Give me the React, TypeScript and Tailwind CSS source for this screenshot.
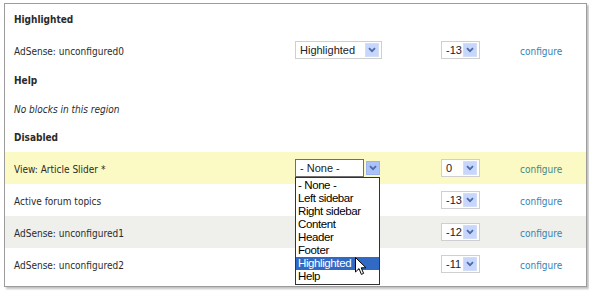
import React from 'react';

const label = "font-['DejaVu_Sans_Condensed','DejaVu_Sans',sans-serif] text-[10px] text-[#2b2b2b]";
const ctl = "font-['Liberation_Sans',Arial,sans-serif] text-[11px] text-[#222]";

const Chevron: React.FC<{ hot?: boolean }> = ({ hot }) => (
  <span
    className={`flex h-[14px] w-[14px] items-center justify-center border ${
      hot ? 'border-[#9db4ee] bg-[#aac2f7]' : 'border-[#d3ddf6] bg-[#c7d6fb]'
    }`}
  >
    <svg width="8" height="6" viewBox="0 0 8 6">
      <path d="M1 1.2 L4 4.2 L7 1.2" fill="none" stroke="#4d6aa8" strokeWidth="1.8" />
    </svg>
  </span>
);

const Select: React.FC<{ value: string; width: string }> = ({ value, width }) => (
  <div className={`flex h-[18px] ${width} items-center justify-between border border-[#cfcfcf] bg-white pl-[4px] pr-[2px] ${ctl}`}>
    <span>{value}</span>
    <Chevron />
  </div>
);

const Configure: React.FC<{ tint?: string }> = ({ tint = 'text-[#3583b5]' }) => (
  <span className={`font-['DejaVu_Sans_Condensed','DejaVu_Sans',sans-serif] text-[10px] ${tint}`}>configure</span>
);

const Header: React.FC<{ text: string; h: string }> = ({ text, h }) => (
  <div className={`flex ${h} items-center pl-[9px] font-bold ${label} text-[#1e1e1e]`}>{text}</div>
);

const Row: React.FC<{
  name: string;
  region: React.ReactNode;
  weight: string;
  bg?: string;
  h?: string;
  tint?: string;
}> = ({ name, region, weight, bg = 'bg-white', h = 'h-[32px]', tint }) => (
  <div className={`grid ${h} grid-cols-[290px_146px_79px_1fr] items-center ${bg}`}>
    <span className={`pl-[9px] pt-[2px] ${label}`}>{name}</span>
    <div>{region}</div>
    <div>
      <Select value={weight} width="w-[39px]" />
    </div>
    <div className="mb-[2px] leading-none">
      <Configure tint={tint} />
    </div>
  </div>
);

const options = ['- None -', 'Left sidebar', 'Right sidebar', 'Content', 'Header', 'Footer', 'Highlighted', 'Help'];

export default function App() {
  return (
    <div className="relative h-[291px] w-[589px] overflow-hidden bg-white">
      <div className="absolute left-[4px] top-[3px] h-[284px] w-[583px] border border-[#9c9c9c] bg-white shadow-[2px_2px_2px_rgba(0,0,0,0.25)]">
        <Header text="Highlighted" h="h-[31px]" />
        <Row
          name="AdSense: unconfigured0"
          h="h-[30px]"
          region={<Select value="Highlighted" width="w-[87px]" />}
          weight="-13"
        />
        <Header text="Help" h="h-[30px]" />
        <div className={`flex h-[28px] items-center pl-[9px] italic ${label}`}>No blocks in this region</div>
        <Header text="Disabled" h="h-[29px]" />
        <Row
          name="View: Article Slider *"
          bg="bg-[#fcfac4]"
          tint="text-[#3f8787]"
          region={
            <div className={`flex h-[18px] w-[87px] items-center gap-[2px] ${ctl}`}>
              <div className="flex h-[18px] w-[69px] items-center border border-[#6f6f6f] bg-white pl-[4px]">- None -</div>
              <Chevron hot />
            </div>
          }
          weight="0"
        />
        <Row name="Active forum topics" region={null} weight="-13" />
        <Row name="AdSense: unconfigured1" bg="bg-[#efefeb]" region={null} weight="-12" />
        <Row name="AdSense: unconfigured2" region={null} weight="-11" />
      </div>

      <ul className="absolute left-[295px] top-[177px] w-[85px] border border-[#333] bg-white py-[1px] font-['Liberation_Sans',Arial,sans-serif] text-[11.5px] leading-[13px] tracking-[-0.4px] text-black">
        {options.map((o) => (
          <li key={o} className={`h-[13px] pl-[2px] ${o === 'Highlighted' ? 'bg-[#316ac5] text-white' : ''}`}>
            {o}
          </li>
        ))}
      </ul>

      <svg className="absolute left-[355px] top-[257px]" width="12" height="19" viewBox="0 0 12 19">
        <path
          d="M0.5 0.5 L0.5 15 L4 11.6 L6.4 17.4 L8.6 16.4 L6.2 10.8 L11 10.8 Z"
          fill="white"
          stroke="black"
          strokeWidth="1"
          strokeLinejoin="round"
        />
      </svg>
    </div>
  );
}
